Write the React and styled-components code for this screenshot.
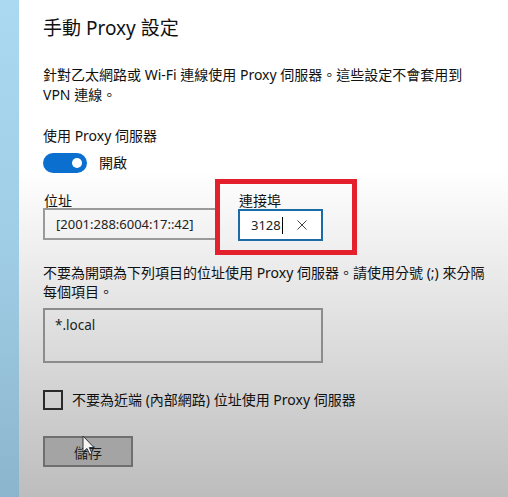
import React from 'react';
import styled, { createGlobalStyle } from 'styled-components';

const GlobalStyle = createGlobalStyle`
  html, body {
    margin: 0;
    padding: 0;
  }
  body {
    font-family: "Noto Sans", "Noto Sans CJK TC", sans-serif;
    color: #111;
  }
`

const Page = styled.div`
  display: flex;
  width: 508px;
  height: 497px;
  overflow: hidden;
  background: linear-gradient(to bottom, #ffffff 0px, #ffffff 170px, #bdbdbd 497px);
`

const Strip = styled.div`
  flex: 0 0 19px;
  background: linear-gradient(to bottom, #aad9f1 0%, #a0cde6 50%, #8bb5cc 100%);
`

const Panel = styled.div`
  flex: 1;
  display: flex;
  flex-direction: column;
  align-items: flex-start;
  padding: 14px 0 0 24px;
`

const Title = styled.h1`
  margin: 0;
  font-size: 19px;
  font-weight: 400;
  line-height: 28px;
  color: #111;
`

const Text = styled.p`
  margin: ${p => p.$top || 0}px 0 0;
  font-size: 14px;
  line-height: ${p => p.$lh || 20}px;
  color: #111;
`

const ToggleRow = styled.div`
  display: flex;
  align-items: center;
  gap: 12px;
  margin-top: 7px;
  height: 20px;
`

const Toggle = styled.div`
  position: relative;
  width: 44px;
  height: 20px;
  border-radius: 10px;
  background: #0b6fd0;

  &::after {
    content: '';
    position: absolute;
    right: 5px;
    top: 5px;
    width: 10px;
    height: 10px;
    border-radius: 50%;
    background: #fff;
  }
`

const ToggleText = styled.span`
  font-size: 14px;
  line-height: 20px;
`

const FieldRow = styled.div`
  display: flex;
  gap: 18px;
  margin-top: 21px;
`

const Field = styled.div`
  position: relative;
  display: flex;
  flex-direction: column;
`

const FieldLabel = styled.label`
  font-size: 14px;
  line-height: 14px;
  height: 14px;
  padding-left: 1px;
`

const Input = styled.div`
  box-sizing: border-box;
  display: flex;
  align-items: center;
  width: ${p => p.$w}px;
  height: 32px;
  margin-top: ${p => p.$mt || 0}px;
  padding: 0 8px 0 11px;
  border: 2px solid ${p => (p.$focus ? '#1b6ca6' : '#9a9a9a')};
  font-size: 13px;
  color: #222;
  background: ${p => (p.$focus ? '#fff' : 'transparent')};
`

const Caret = styled.span`
  display: inline-block;
  width: 1px;
  height: 17px;
  margin-left: 1px;
  background: #000;
`

const ClearIcon = styled.svg`
  margin-left: auto;
  margin-right: 6px;
`

const Highlight = styled.div`
  position: absolute;
  left: -23px;
  top: -15px;
  width: 142px;
  height: 76px;
  box-sizing: border-box;
  border: 5px solid #e3202b;
  pointer-events: none;
`

const Exceptions = styled.div`
  box-sizing: border-box;
  width: 280px;
  height: 55px;
  margin-top: 7px;
  padding: 5px 10px;
  border: 2px solid #8c8c8c;
  font-size: 13.5px;
  line-height: 20px;
  color: #222;
`

const CheckRow = styled.label`
  display: flex;
  align-items: center;
  gap: 9px;
  margin-top: 27px;
  font-size: 14px;
  line-height: 20px;
`

const Box = styled.span`
  box-sizing: border-box;
  width: 20px;
  height: 20px;
  border: 2px solid #2a2a2a;
`

const SaveButton = styled.button`
  position: relative;
  box-sizing: border-box;
  width: 90px;
  height: 31px;
  margin-top: 26px;
  padding: 0;
  border: 2px solid #6f6f6f;
  background: #a4a4a4;
  font-family: inherit;
  font-size: 14px;
  color: #1a1a1a;
`

const Cursor = styled.svg`
  position: absolute;
  left: 37px;
  top: -3px;
`

const App = () => (
  <>
    <GlobalStyle />
    <Page>
      <Strip />
      <Panel>
        <Title>手動 Proxy 設定</Title>
        <Text $top={23}>
          針對乙太網路或 Wi-Fi 連線使用 Proxy 伺服器。這些設定不會套用到
          <br />
          VPN 連線。
        </Text>
        <Text $top={21}>使用 Proxy 伺服器</Text>
        <ToggleRow>
          <Toggle />
          <ToggleText>開啟</ToggleText>
        </ToggleRow>
        <FieldRow>
          <Field>
            <FieldLabel>位址</FieldLabel>
            <Input $w={177}>[2001:288:6004:17::42]</Input>
          </Field>
          <Field>
            <FieldLabel>連接埠</FieldLabel>
            <Input $w={85} $mt={1} $focus>
              3128
              <Caret />
              <ClearIcon width="10" height="10" viewBox="0 0 10 10">
                <path d="M0.5 0.5 L9.5 9.5 M9.5 0.5 L0.5 9.5" stroke="#444" strokeWidth="1" />
              </ClearIcon>
            </Input>
            <Highlight />
          </Field>
        </FieldRow>
        <Text $top={22} $lh={19}>
          不要為開頭為下列項目的位址使用 Proxy 伺服器。請使用分號 (;) 來分隔
          <br />
          每個項目。
        </Text>
        <Exceptions>*.local</Exceptions>
        <CheckRow>
          <Box />
          不要為近端 (內部網路) 位址使用 Proxy 伺服器
        </CheckRow>
        <SaveButton>
          儲存
          <Cursor width="13" height="21" viewBox="0 0 13 21">
            <path
              d="M1 1 L1 17 L5 13.5 L7.8 19.5 L10 18.5 L7.3 12.5 L12 12.5 Z"
              fill="#f4f4f4"
              stroke="#333"
              strokeWidth="1"
              strokeLinejoin="round"
            />
          </Cursor>
        </SaveButton>
      </Panel>
    </Page>
  </>
)

export default App;
